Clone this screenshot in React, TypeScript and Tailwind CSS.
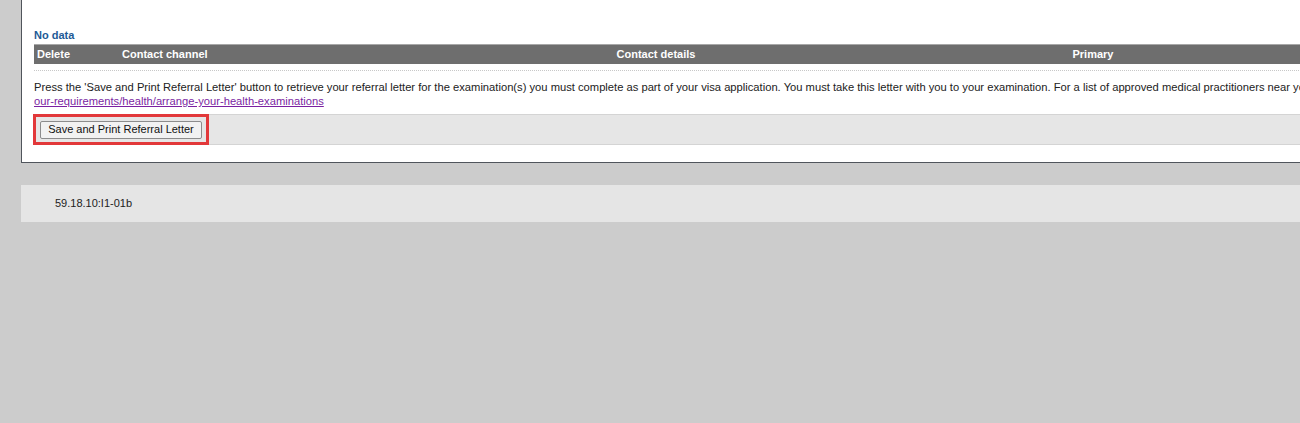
import React from "react";

export default function App() {
  const font = { fontFamily: '"Liberation Sans", Arial, sans-serif' };
  return (
    <div className="w-[1300px] h-[423px] overflow-hidden bg-[#cccccc]" style={font}>
      <div className="ml-[21px] w-[1400px] h-[163px] bg-white border-l border-b border-[#50555c] pl-[12px] pt-[28px]">
        <div className="text-[11px] leading-[15px] font-bold text-[#1d5a96]">No data</div>
        <div className="flex h-[20px] mt-[1px] items-center bg-[#6e6e6e] border-t border-[#a8a8a8] text-white text-[11px] font-bold">
          <div className="w-[85px] pl-[3px]">Delete</div>
          <div className="w-[321px] pl-[3px]">Contact channel</div>
          <div className="w-[432px] text-center">Contact details</div>
          <div className="w-[442px] text-center">Primary</div>
        </div>
        <div className="mt-[6px] border-t border-dotted border-[#c8c8c8]" />
        <div className="mt-[10px] text-[11.2px] leading-[13px] text-[#222222] whitespace-nowrap">
          <div>
            Press the 'Save and Print Referral Letter' button to retrieve your referral letter for the examination(s) you must complete as part of your visa application. You must take this letter with you to your examination. For a list of approved medical practitioners near you, visit{" "}
            <span className="text-[#7b1fa2] underline">https://immi.homeaffairs.gov.au/help-support/meeting-</span>
          </div>
          <div className="mt-[1px]">
            <a className="text-[#7b1fa2] underline" href="#">our-requirements/health/arrange-your-health-examinations</a>
          </div>
        </div>
        <div className="mt-[6px] h-[31px] bg-[#e6e6e6] border-t border-b border-[#d4d4d4] -ml-[1px] flex items-center">
          <div className="h-[31px] -mt-[1px] -mb-[1px] border-[3px] border-[#e2383a] px-[4px] flex items-center">
            <button className="h-[18px] w-[162px] bg-[#f2f2f2] border border-[#8c8c8c] rounded-[2px] text-[11px] text-[#111111] leading-none">
              Save and Print Referral Letter
            </button>
          </div>
        </div>
      </div>
      <div className="mt-[22px] ml-[21px] h-[37px] bg-[#e5e5e5] flex items-center pl-[34px] text-[11px] text-[#222222]">
        59.18.10:I1-01b
      </div>
    </div>
  );
}
